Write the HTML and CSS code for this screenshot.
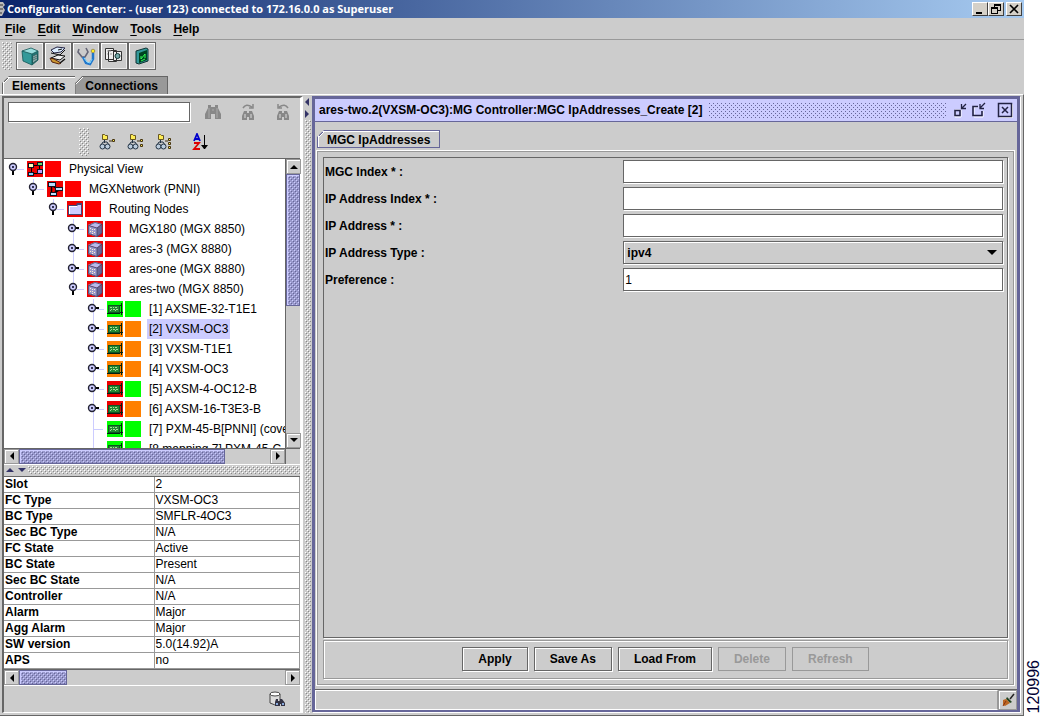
FILE: index.html
```html
<!DOCTYPE html>
<html lang="en">
<head>
    <meta charset="UTF-8">
    <meta name="viewport" content="width=device-width, initial-scale=1.0">
    <title>Configuration Center</title>
    <link rel="stylesheet" href="styles.css">
</head>
<body>
    <!-- shared icon shapes -->
    <svg class="sprite" aria-hidden="true">
        <symbol id="open" viewBox="0 0 12 14">
            <path d="M5 8h2v5H5z" fill="#000"/>
            <circle cx="6" cy="5" r="3.5" fill="#ccf" stroke="#223" stroke-width="1.4"/>
            <path d="M5 4h2v2H5z" fill="#335"/>
        </symbol>
        <symbol id="closed" viewBox="0 0 12 14">
            <path d="M8 5h5v2H8z" fill="#000"/>
            <circle cx="5" cy="6" r="3.5" fill="#ccf" stroke="#223" stroke-width="1.4"/>
            <path d="M4 5h2v2H4z" fill="#335"/>
        </symbol>
        <symbol id="view" viewBox="0 0 16 16">
            <path d="M6 4.500h4M4.500 6v5M5 12.500h5M12.500 4v6" stroke="#000" fill="none"/>
            <path d="M1 2h6v5H1zM10 1h6v4h-6zM1 11h6v4H1zM10 8h6v5h-6z" fill="#112"/>
            <path d="M2 3h4v3H2z" fill="#ffb"/><path d="M11 2h4v2h-4z" fill="#6d6"/><path d="M2 12h4v2H2z" fill="#8cf"/><path d="M11 9h4v3h-4z" fill="#b9f"/>
        </symbol>
        <symbol id="network" viewBox="0 0 16 16">
            <path d="M4.500 5v7M6 5l5 3M7 12l5-3" stroke="#000" stroke-width="1.500" fill="none"/>
            <path d="M1 1h8v5H1zM8 6h8v4H8zM3 11h7v4H3z" fill="#112"/>
            <path d="M2 2h6v3H2zM9 7h6v2H9zM4 12h5v2H4z" fill="#bdf"/>
        </symbol>
        <symbol id="folder" viewBox="0 0 16 16">
            <path d="M1 4h8l1-2h5v12H1z" fill="#447"/><path d="M2 5h8l1-1h3v9H2z" fill="#ccf"/><path d="M2 5h1v8H2zM3 5h7v1H3z" fill="#fff"/>
        </symbol>
        <symbol id="node" viewBox="0 0 16 16">
            <path d="M1 4l7-3 7 2-5 4z" fill="#bbe"/><path d="M1 4l9 3v9l-9-3z" fill="#99c"/><path d="M10 7l5-4v9l-5 4z" fill="#669"/>
            <path d="M1.500 4.500L10 7v8.500l-8.500-3zM10 7l5-4v9l-5 3.500M1.500 4.500L8 1.500l7 2" fill="none" stroke="#446" stroke-width=".8"/>
            <path d="M3 7h1v1H3zM5 8h1v1H5zM7 8h1v1H7zM3 10h1v1H3zM5 10h1v1H5zM7 11h1v1H7zM5 12h1v1H5z" fill="#fec"/>
        </symbol>
        <symbol id="card" viewBox="0 0 16 16">
            <path d="M1 4h12v8H1z" fill="#152"/><path d="M2 5h10v6H2z" fill="#283"/>
            <path d="M0 12h13v1H0zM14 2h1v12h-1zM13 4h1v1h-1zM13 11h3v1h-3z" fill="#021"/>
            <path d="M3 6h2v1H3zM6 6h1v1H6zM8 6h2v1H8zM4 8h1v1H4zM6 8h2v1H6zM9 8h2v1H9zM3 9h1v1H3zM8 9h1v1H8z" fill="#ad9"/>
        </symbol>
        <symbol id="binoculars" viewBox="0 0 18 18">
            <path d="M4 2h3v2h4V2h3v3l3 6v5h-6v-5H7v5H1v-5l3-6z" fill="#888"/><path d="M5 5v10M13 5v10M8 7h2" stroke="#aaa"/>
        </symbol>
        <symbol id="next" viewBox="0 0 18 18">
            <path d="M5 8h3v2h2V8h3l2 5v4h-5v-3H8v3H3v-4z" fill="#888"/><path d="M6 11v4M12 11v4" stroke="#ddd"/>
            <path d="M4 5q3-5 9-1M14 1v4h-4" fill="none" stroke="#888" stroke-width="1.500"/>
        </symbol>
        <symbol id="glasses" viewBox="0 0 18 18">
            <path d="M3.500 1.500h2l1 1h2v4h-5z" fill="#fe5" stroke="#652"/>
            <path d="M5.500 7v3M2 12l2-3h4l2 3" fill="none" stroke="#234"/>
            <circle cx="3.500" cy="13.500" r="2.500" fill="#bcd" stroke="#234"/><circle cx="8.500" cy="13.500" r="2.500" fill="#bcd" stroke="#234"/>
        </symbol>
    </svg>

    <div class="app">
        <header class="titlebar">
            <svg class="app-icon" viewBox="0 0 6 16"><path d="M0 1h3l2 3-2 2 2 3-3 6H0z" fill="#bbb"/><path d="M0 4h3M0 8h3M0 12h2" stroke="#333"/></svg>
            <h1>Configuration Center: - (user 123) connected to 172.16.0.0 as Superuser</h1>
            <div class="window-buttons">
                <button aria-label="Minimize"><svg viewBox="0 0 14 12"><path d="M3 9h6v2H3z"/></svg></button>
                <button aria-label="Restore"><svg viewBox="0 0 14 12"><path d="M5 1h7v7h-3v3H2V4h3zM6 3v1h3v3h2V3zM3 6v4h5V6z" fill-rule="evenodd"/></svg></button>
                <button class="close" aria-label="Close"><svg viewBox="0 0 14 12"><path d="M3 2l8 8M11 2l-8 8" stroke="#000" stroke-width="1.600"/></svg></button>
            </div>
        </header>

        <nav class="menubar">
            <button><u>F</u>ile</button>
            <button><u>E</u>dit</button>
            <button><u>W</u>indow</button>
            <button><u>T</u>ools</button>
            <button><u>H</u>elp</button>
        </nav>

        <div class="toolbar">
            <span class="grip"></span>
            <button aria-label="Elements"><svg viewBox="0 0 20 20"><path d="M2 5l9-3 7 3-6 3z" fill="#9dd"/><path d="M2 5l10 3v11L3 15z" fill="#399"/><path d="M12 8l6-3v9l-6 5z" fill="#277"/><path d="M2 5l9-3 7 3v9l-6 5-9-4zM12 8v11M2 5l10 3 6-3" fill="none" stroke="#155" stroke-width=".8"/><path d="M13 10l4-2v6l-4 3zM13 12l4-2M13 14l4-2M15 9v7" fill="#bdd" stroke="#244" stroke-width=".6"/></svg></button>
            <button aria-label="Configure"><svg viewBox="0 0 20 20"><path d="M3 4l6-3 8 1-4 4-7 1z" fill="#def" stroke="#224"/><path d="M10 4l4-1M3 7l9 2 5-5" stroke="#111" fill="none"/><path d="M3 12l7-3 7 1-5 4z" fill="#eee" stroke="#111"/><path d="M2 12l4 1 7 4-2 1-7-2z" fill="#c93" stroke="#521"/><path d="M12 17l5-4" stroke="#111" stroke-width="1.500"/></svg></button>
            <button aria-label="Diagnostics"><svg viewBox="0 0 20 20"><path d="M3 3l-1 3 4 5h3l3-5-2-4" fill="none" stroke="#667" stroke-width="1.600"/><path d="M7 11l3 6 4 1 3-5V7" fill="none" stroke="#27c" stroke-width="2.500"/><path d="M8 12l3 4 3 1 2-4" fill="none" stroke="#8df"/><circle cx="17" cy="5" r="1.800" fill="#fe2" stroke="#763" stroke-width=".6"/></svg></button>
            <button aria-label="Statistics"><svg viewBox="0 0 20 20"><g fill="#eee" stroke="#333"><path d="M1.500 2.500h8v11h-8zM4.500 4.500h8v11h-8zM9.500 5.500h8v9h-8z"/></g><circle cx="13.500" cy="10" r="2.500" fill="#7aa" stroke="#133"/><path d="M3 5h4M3 8h1M6 8h2" stroke="#999"/></svg></button>
            <button aria-label="Chassis"><svg viewBox="0 0 20 20"><path d="M4 5l10-3 2 1v12L7 18l-3-1z" fill="#399" stroke="#133"/><path d="M7 7l8-3v10l-8 3z" fill="#042"/><path d="M9 10v3l4-5v4M9 15l4-2" stroke="#3f5" fill="none"/></svg></button>
        </div>

        <div class="tabs" role="tablist">
            <button class="tab active" role="tab">Elements</button>
            <button class="tab" role="tab">Connections</button>
        </div>

        <main class="workspace">
            <aside class="sidebar">
                <div class="search">
                    <input type="text" aria-label="Find element">
                    <button aria-label="Find"><svg><use href="#binoculars"/></svg></button>
                    <button aria-label="Find next"><svg><use href="#next"/></svg></button>
                    <button class="flip" aria-label="Find previous"><svg><use href="#next"/></svg></button>
                </div>
                <div class="tree-tools">
                    <span class="grip"></span>
                    <button aria-label="Show one level"><svg viewBox="0 0 18 18"><use href="#glasses" width="18" height="18"/><path d="M10 8h3M13.500 6.500h2v2h-2z" fill="#fe5" stroke="#431"/></svg></button>
                    <button aria-label="Show two levels"><svg viewBox="0 0 18 18"><use href="#glasses" width="18" height="18"/><path d="M10 8h3M13.500 6.500h2v2h-2zM13.500 11.500h2v2h-2z" fill="#fe5" stroke="#431"/></svg></button>
                    <button aria-label="Show all levels"><svg viewBox="0 0 18 18"><use href="#glasses" width="18" height="18"/><path d="M10 8h3M13.500 5.500h2v2h-2zM13.500 9.500h2v2h-2zM13.500 13.500h2v2h-2z" fill="#fe5" stroke="#431"/></svg></button>
                    <button class="sort" aria-label="Sort A to Z"><svg viewBox="0 0 18 18"><path d="M2 8l3-7 3 7M3 6h4" fill="none" stroke="#00c" stroke-width="1.800"/><path d="M2 10h5l-5 6h6" fill="none" stroke="#d00" stroke-width="1.800"/><path d="M12 2h1v10h3l-3 4h-1l-3-4h3z"/></svg></button>
                </div>

                <div class="tree-pane">
                    <div class="tree-view">
                        <ul class="tree">
                            <li>
                                <div class="row"><button class="toggle" aria-label="Collapse"><svg><use href="#open"/></svg></button><svg class="icon red"><use href="#view"/></svg><i class="status red"></i><span class="label">Physical View</span></div>
                                <ul>
                                    <li>
                                        <div class="row"><button class="toggle" aria-label="Collapse"><svg><use href="#open"/></svg></button><svg class="icon red"><use href="#network"/></svg><i class="status red"></i><span class="label">MGXNetwork (PNNI)</span></div>
                                        <ul>
                                            <li>
                                                <div class="row"><button class="toggle" aria-label="Collapse"><svg><use href="#open"/></svg></button><svg class="icon red"><use href="#folder"/></svg><i class="status red"></i><span class="label">Routing Nodes</span></div>
                                                <ul>
                                                    <li><div class="row"><button class="toggle" aria-label="Expand"><svg><use href="#closed"/></svg></button><svg class="icon red"><use href="#node"/></svg><i class="status red"></i><span class="label">MGX180 (MGX 8850)</span></div></li>
                                                    <li><div class="row"><button class="toggle" aria-label="Expand"><svg><use href="#closed"/></svg></button><svg class="icon red"><use href="#node"/></svg><i class="status red"></i><span class="label">ares-3 (MGX 8880)</span></div></li>
                                                    <li><div class="row"><button class="toggle" aria-label="Expand"><svg><use href="#closed"/></svg></button><svg class="icon red"><use href="#node"/></svg><i class="status red"></i><span class="label">ares-one (MGX 8880)</span></div></li>
                                                    <li>
                                                        <div class="row"><button class="toggle" aria-label="Collapse"><svg><use href="#open"/></svg></button><svg class="icon red"><use href="#node"/></svg><i class="status red"></i><span class="label">ares-two (MGX 8850)</span></div>
                                                        <ul>
                                                            <li><div class="row"><button class="toggle" aria-label="Expand"><svg><use href="#closed"/></svg></button><svg class="icon green"><use href="#card"/></svg><i class="status green"></i><span class="label">[1] AXSME-32-T1E1</span></div></li>
                                                            <li><div class="row"><button class="toggle" aria-label="Expand"><svg><use href="#closed"/></svg></button><svg class="icon orange"><use href="#card"/></svg><i class="status orange"></i><span class="label selected">[2] VXSM-OC3</span></div></li>
                                                            <li><div class="row"><button class="toggle" aria-label="Expand"><svg><use href="#closed"/></svg></button><svg class="icon orange"><use href="#card"/></svg><i class="status orange"></i><span class="label">[3] VXSM-T1E1</span></div></li>
                                                            <li><div class="row"><button class="toggle" aria-label="Expand"><svg><use href="#closed"/></svg></button><svg class="icon orange"><use href="#card"/></svg><i class="status orange"></i><span class="label">[4] VXSM-OC3</span></div></li>
                                                            <li><div class="row"><button class="toggle" aria-label="Expand"><svg><use href="#closed"/></svg></button><svg class="icon red"><use href="#card"/></svg><i class="status green"></i><span class="label">[5] AXSM-4-OC12-B</span></div></li>
                                                            <li><div class="row"><button class="toggle" aria-label="Expand"><svg><use href="#closed"/></svg></button><svg class="icon red"><use href="#card"/></svg><i class="status orange"></i><span class="label">[6] AXSM-16-T3E3-B</span></div></li>
                                                            <li><div class="row"><span class="leaf"></span><svg class="icon green"><use href="#card"/></svg><i class="status green"></i><span class="label">[7] PXM-45-B[PNNI] (cove</span></div></li>
                                                            <li><div class="row"><span class="leaf"></span><svg class="icon green"><use href="#card"/></svg><i class="status green"></i><span class="label">[8 mapping 7] PXM-45-C</span></div></li>
                                                        </ul>
                                                    </li>
                                                </ul>
                                            </li>
                                        </ul>
                                    </li>
                                </ul>
                            </li>
                        </ul>
                    </div>
                    <div class="scrollbar vertical">
                        <button aria-label="Scroll up"><svg viewBox="0 0 10 10"><path d="M1 7l4-4 4 4z"/></svg></button>
                        <div class="track"><div class="thumb tree-y"></div></div>
                        <button aria-label="Scroll down"><svg viewBox="0 0 10 10"><path d="M1 3l4 4 4-4z"/></svg></button>
                    </div>
                    <div class="scrollbar">
                        <button aria-label="Scroll left"><svg viewBox="0 0 10 10"><path d="M7 1L3 5l4 4z"/></svg></button>
                        <div class="track"><div class="thumb tree-x"></div></div>
                        <button aria-label="Scroll right"><svg viewBox="0 0 10 10"><path d="M3 1l4 4-4 4z"/></svg></button>
                    </div>
                    <div class="corner"></div>
                </div>

                <div class="divider-row">
                    <svg viewBox="0 0 24 8"><path d="M2 6l4-4 4 4zM14 2l4 4 4-4z"/></svg>
                    <span class="bumps"></span>
                </div>

                <div class="details">
                    <table>
                        <tbody>
                            <tr><th scope="row">Slot</th><td>2</td></tr>
                            <tr><th scope="row">FC Type</th><td>VXSM-OC3</td></tr>
                            <tr><th scope="row">BC Type</th><td>SMFLR-4OC3</td></tr>
                            <tr><th scope="row">Sec BC Type</th><td>N/A</td></tr>
                            <tr><th scope="row">FC State</th><td>Active</td></tr>
                            <tr><th scope="row">BC State</th><td>Present</td></tr>
                            <tr><th scope="row">Sec BC State</th><td>N/A</td></tr>
                            <tr><th scope="row">Controller</th><td>N/A</td></tr>
                            <tr><th scope="row">Alarm</th><td>Major</td></tr>
                            <tr><th scope="row">Agg Alarm</th><td>Major</td></tr>
                            <tr><th scope="row">SW version</th><td>5.0(14.92)A</td></tr>
                            <tr><th scope="row">APS</th><td>no</td></tr>
                        </tbody>
                    </table>
                    <div class="scrollbar">
                        <button aria-label="Scroll left"><svg viewBox="0 0 10 10"><path d="M7 1L3 5l4 4z"/></svg></button>
                        <div class="track"><div class="thumb details-x"></div></div>
                        <button aria-label="Scroll right"><svg viewBox="0 0 10 10"><path d="M3 1l4 4-4 4z"/></svg></button>
                    </div>
                </div>

                <div class="sidebar-foot">
                    <button aria-label="Find in database"><svg viewBox="0 0 16 16"><path d="M1 3v9q4 3 10 1V3" fill="#ddd" stroke="#444"/><ellipse cx="6" cy="3" rx="5" ry="2" fill="#fff" stroke="#444"/><path d="M7 8h2v2h2V8h2l3 4v3h-4v-2h-1v2H6v-4z" fill="#334"/><path d="M7 13h2M13 13h2" stroke="#8ad" stroke-width="2"/></svg></button>
                </div>
            </aside>

            <div class="divider-col">
                <svg viewBox="0 0 6 24"><path d="M5 2v8L1 6zM1 14v8l4-4z"/></svg>
                <span class="bumps"></span>
            </div>

            <section class="frame">
                <header class="frame-title">
                    <h2>ares-two.2(VXSM-OC3):MG Controller:MGC IpAddresses_Create [2]</h2>
                    <span class="bumps"></span>
                    <div class="frame-buttons">
                        <button aria-label="Iconify"><svg viewBox="0 0 16 16"><path d="M2 8h6v7H2z" fill="none" stroke="#fff"/><path d="M2 8.500h5v5H2z" fill="none" stroke="#224" stroke-width="1.600"/><path d="M13 2L9 6M8.500 2v4.500H13" fill="none" stroke="#224" stroke-width="1.300"/></svg></button>
                        <button aria-label="Maximize"><svg viewBox="0 0 16 16"><path d="M7 5H3v10h9V9" fill="none" stroke="#fff"/><path d="M7 4.500H2v9h9V9" fill="none" stroke="#224" stroke-width="1.600"/><path d="M14 1L9 6M9 2v4.500h4" fill="none" stroke="#224" stroke-width="1.300"/></svg></button>
                        <button class="frame-close" aria-label="Close form"><svg viewBox="0 0 16 16"><path d="M2.500 2.500h13v13h-13z" fill="none" stroke="#fff"/><path d="M1.500 1.500h13v13h-13z" fill="#ccf" stroke="#224" stroke-width="1.500"/><path d="M5 5l6 6M11 5l-6 6" stroke="#224" stroke-width="1.500"/></svg></button>
                    </div>
                </header>

                <div class="frame-tabs" role="tablist">
                    <button class="tab" role="tab">MGC IpAddresses</button>
                </div>

                <form class="panel">
                    <div class="fields">
                        <label for="mgc-index">MGC Index * :</label>
                        <input type="text" id="mgc-index">
                        <label for="ip-index">IP Address Index * :</label>
                        <input type="text" id="ip-index">
                        <label for="ip-address">IP Address * :</label>
                        <input type="text" id="ip-address">
                        <label for="ip-type">IP Address Type :</label>
                        <div class="combo">
                            <select id="ip-type"><option>ipv4</option></select>
                            <svg viewBox="0 0 10 5"><path d="M0 0h10L5 5z"/></svg>
                        </div>
                        <label for="preference">Preference :</label>
                        <input type="text" id="preference" value="1">
                    </div>
                    <div class="actions">
                        <button type="button">Apply</button>
                        <button type="button">Save As</button>
                        <button type="button">Load From</button>
                        <button type="button" disabled>Delete</button>
                        <button type="button" disabled>Refresh</button>
                    </div>
                </form>

                <footer class="frame-status">
                    <output></output>
                    <button aria-label="Pin messages"><svg viewBox="0 0 16 16"><path d="M14 2l-4 5" stroke="#222" stroke-width="1.500"/><path d="M7 5l5 5-2 1-4-4z" fill="#242"/><path d="M3 8l3-1 4 4-5 3-2-1z" fill="#b62"/><path d="M3 14l3-5" stroke="#831"/></svg></button>
                </footer>
            </section>
        </main>
    </div>

    <div class="figure-number"><span>120996</span></div>
</body>
</html>
```
FILE: styles.css
```css
/* --- RESET & BASE -------------------------------------- */
* { box-sizing: border-box; margin: 0; padding: 0; }
:root {
    --face: #ccc;
    --dark: #666;
    --mid: #999;
    --purple: #669;
    --lavender: #ccf;
    --bumps: url("data:image/svg+xml,%3Csvg xmlns='http://www.w3.org/2000/svg' width='4' height='4' shape-rendering='crispEdges'%3E%3Cpath d='M0 0h1v1H0zM2 2h1v1H2z' fill='%23fff'/%3E%3Cpath d='M1 1h1v1H1zM3 3h1v1H3z' fill='%23888'/%3E%3C/svg%3E");
    --bumps-purple: url("data:image/svg+xml,%3Csvg xmlns='http://www.w3.org/2000/svg' width='4' height='4' shape-rendering='crispEdges'%3E%3Cpath d='M0 0h1v1H0zM2 2h1v1H2z' fill='%23ccf'/%3E%3Cpath d='M1 1h1v1H1zM3 3h1v1H3z' fill='%23669'/%3E%3C/svg%3E");
}
body {
    display: flex;
    height: 100vh;
    overflow: hidden;
    background: #fff;
    color: #000;
    font: 12px/16px "Liberation Sans", Arial, sans-serif;
}
button, input, select { font: inherit; color: inherit; }
button { border: none; background: none; }
button, label { font-weight: 700; }
ul { list-style: none; }
svg { display: block; }
.sprite { position: absolute; width: 0; height: 0; }

.app {
    flex: 1;
    min-width: 0;
    display: flex;
    flex-direction: column;
    background: var(--face);
    border-bottom: 1px solid var(--dark);
}

/* --- TITLE BAR ----------------------------------------- */
.titlebar {
    display: flex;
    align-items: center;
    height: 18px;
    padding-right: 2px;
    background: linear-gradient(90deg, #0a246a, #a6caf0);
    color: #fff;
}
.app-icon { width: 6px; height: 16px; margin-right: 1px; }
.titlebar h1 { flex: 1; font: 700 11px/16px "Open Sans", Tahoma, sans-serif; }
.window-buttons { display: flex; }
.window-buttons button {
    width: 16px;
    height: 14px;
    background: #d4d0c8;
    border: 1px solid;
    border-color: #fff #404040 #404040 #fff;
}
.window-buttons svg { width: 14px; height: 12px; }
.window-buttons .close { margin-left: 2px; }

/* --- MENU & TOOLBAR ------------------------------------ */
.menubar {
    display: flex;
    align-items: flex-end;
    gap: 12px;
    height: 22px;
    padding: 0 5px 1px;
    border-bottom: 1px solid var(--mid);
}
.menubar button { height: 18px; }
.menubar u { text-underline-offset: 2px; }

.toolbar {
    display: flex;
    height: 36px;
    padding: 2px;
}
.grip { width: 10px; height: 28px; background: var(--bumps); }
.toolbar .grip { margin-right: 4px; }
.toolbar button {
    display: grid;
    place-items: center;
    width: 28px;
    height: 28px;
    border: 1px solid var(--dark);
    box-shadow: inset 1px 1px #fff, inset -1px -1px #eee;
}
.toolbar svg { width: 20px; height: 20px; }

/* --- TABS ---------------------------------------------- */
.tabs { display: flex; height: 18px; padding-left: 2px; }
.tab {
    height: 18px;
    padding: 2px 10px 0;
    background: linear-gradient(135deg, var(--dark) 6px, #fff 6px, #fff 7px, var(--mid) 7px);
    box-shadow: inset 1px 1px var(--dark), inset -1px 0 var(--dark);
    clip-path: polygon(0 7px, 7px 0, 100% 0, 100% 100%, 0 100%);
}
.tabs .active {
    background: linear-gradient(135deg, var(--dark) 6px, #fff 6px, #fff 7px, var(--face) 7px);
    box-shadow: inset 1px 1px var(--dark), inset 2px 2px #fff;
}

/* --- WORKSPACE ----------------------------------------- */
.workspace {
    flex: 1;
    min-height: 0;
    display: flex;
    padding: 1px 2px 2px;
    border-top: 1px solid #fff;
    border-right: 1px solid var(--dark);
}
.bumps { flex: 1; background: var(--bumps); }

.sidebar {
    display: flex;
    flex-direction: column;
    width: 301px;
    border: solid var(--dark);
    border-width: 2px 0 0 2px;
    border-right: 3px solid #fff;
    border-bottom: 1px solid #fff;
}
.search {
    display: flex;
    align-items: center;
    gap: 17px;
    padding: 4px 8px 4px 4px;
}
.search input { flex: 1; width: 0; margin-right: -3px; }
.search svg, .tree-tools svg { width: 18px; height: 18px; }
.flip { transform: scaleX(-1); }
.tree-tools {
    display: flex;
    align-items: center;
    gap: 10px;
    height: 32px;
    padding-left: 75px;
}
.tree-tools .sort { margin-left: 9px; }

input {
    height: 20px;
    padding: 0 1px;
    background: #fff;
    border: 1px solid var(--dark);
    box-shadow: 1px 1px #fff;
    outline: none;
}

/* --- SCROLLBARS ---------------------------------------- */
.scrollbar {
    display: flex;
    height: 16px;
    border-top: 1px solid var(--dark);
}
.scrollbar button {
    display: grid;
    place-items: center;
    width: 15px;
    height: 15px;
    border: 1px solid var(--mid);
    box-shadow: inset 1px 1px #fff;
}
.scrollbar button svg { width: 10px; height: 10px; }
.track { flex: 1; display: flex; }
.thumb { background: var(--bumps-purple) 3px 3px #99c; border: 1px solid var(--purple); box-shadow: inset 1px 1px var(--lavender); }
.vertical {
    flex-direction: column;
    width: 15px;
    height: auto;
    border-top: none;
    border-left: 1px solid var(--dark);
}
.vertical .track { flex-direction: column; }
.tree-y { height: 51%; }
.tree-x { width: 82%; }
.details-x { width: 18%; }

/* --- ELEMENT TREE -------------------------------------- */
.tree-pane {
    flex: 1;
    min-height: 0;
    display: grid;
    grid-template: minmax(0, 1fr) 16px / minmax(0, 1fr) 15px;
    border-top: 1px solid var(--dark);
}
.corner { border: solid var(--dark); border-width: 1px 0 0 1px; }
.tree-view { overflow: hidden; background: #fff; }
.tree { padding-left: 3px; }
.tree ul { padding-left: 20px; }
.tree ul > li { background: linear-gradient(var(--lavender), var(--lavender)) 6px 0 / 1px 100% no-repeat; }
.tree ul > li:last-child { background-size: 1px 10px; }
.row { display: flex; align-items: center; height: 20px; }
.toggle { flex: none; width: 20px; background: linear-gradient(var(--lavender), var(--lavender)) 10px 7px / 7px 1px no-repeat; }
.toggle svg { width: 12px; height: 14px; overflow: visible; }
.leaf { flex: none; width: 20px; height: 1px; background: linear-gradient(90deg, transparent 6px, var(--lavender) 6px, var(--lavender) 16px, transparent 16px); }
.icon, .status { flex: none; width: 16px; height: 16px; }
.status { margin: 0 6px 0 2px; }
.red { background: #f00; }
.green { background: #0f0; }
.orange { background: #ff8000; }
.icon.red { background: #e00; }
.label { height: 20px; padding: 0 2px; line-height: 20px; white-space: nowrap; }
.selected { background: var(--lavender); }

/* --- SPLIT DIVIDERS ------------------------------------ */
.divider-row { display: flex; align-items: center; height: 12px; border-top: 1px solid #fff; }
.divider-row svg { width: 24px; height: 8px; fill: #336; }
.divider-row .bumps { height: 8px; }
.divider-col { display: flex; flex-direction: column; width: 9px; padding-left: 1px; }
.divider-col svg { width: 6px; height: 24px; fill: #336; }
.divider-col .bumps { margin: 0 1px; }

/* --- DETAILS TABLE ------------------------------------- */
.details { border-top: 1px solid var(--dark); border-bottom: 1px solid #fff; }
table { width: 100%; border-collapse: collapse; table-layout: fixed; background: #fff; }
th, td { height: 16px; padding: 0 1px; line-height: 15px; text-align: left; border-bottom: 1px solid var(--mid); }
th { width: 150px; border-right: 1px solid var(--mid); }
td { border-right: 1px solid var(--mid); }
.sidebar-foot { display: flex; justify-content: flex-end; padding: 5px 15px 5px; }
.sidebar-foot svg { width: 16px; height: 16px; }

/* --- INTERNAL FRAME ------------------------------------ */
.frame {
    flex: 1;
    min-width: 0;
    display: flex;
    flex-direction: column;
    margin: 0 1px 1px 0;
    border: solid var(--purple);
    border-width: 3px 3px 2px;
    box-shadow: 1px 1px #fff;
}
.frame-title {
    display: flex;
    align-items: center;
    height: 23px;
    padding: 0 4px;
    background: var(--lavender);
    border-bottom: 1px solid var(--purple);
}
.frame-title h2 { font-size: 12px; white-space: nowrap; }
.frame-title .bumps { height: 16px; margin: 0 6px; background: var(--bumps-purple); }
.frame-buttons { display: flex; gap: 2px; }
.frame-buttons svg { width: 16px; height: 16px; }
.frame-close { margin-left: 8px; }
.frame-tabs { padding: 8px 2px 0; }
.frame-tabs .tab {
    padding: 1px 10px 0;
    background: linear-gradient(135deg, var(--purple) 6px, #fff 6px, #fff 7px, var(--face) 7px);
    box-shadow: inset 0 0 0 1px var(--purple), inset 2px 2px #fff;
}
.panel {
    flex: 1;
    min-height: 0;
    display: flex;
    flex-direction: column;
    gap: 2px;
    margin: 2px 2px 3px 1px;
    padding: 6px;
    border: 1px solid #fff;
    box-shadow: inset 1px 1px var(--mid), inset -1px -1px var(--mid);
}
.fields {
    flex: 1;
    display: grid;
    grid-template-columns: 44% 1fr;
    align-content: start;
    align-items: center;
    row-gap: 4px;
    padding: 2px 4px 2px 1px;
    border: 1px solid var(--dark);
    box-shadow: 1px 1px #fff;
}
.fields input { width: 100%; height: 23px; }
.combo { display: grid; align-items: center; justify-items: end; }
.combo select, .combo svg { grid-area: 1 / 1; }
.combo select {
    width: 100%;
    height: 23px;
    padding: 0 3px;
    appearance: none;
    background: var(--face);
    border: 1px solid var(--dark);
    border-radius: 0;
    box-shadow: 1px 1px #fff, inset 1px 1px #fff;
    font-weight: 700;
}
.combo svg { width: 10px; height: 5px; margin-right: 6px; pointer-events: none; }
.actions {
    display: flex;
    justify-content: center;
    gap: 6px;
    padding: 6px 0 7px;
    border: 1px solid var(--mid);
    box-shadow: 1px 1px #fff, inset 1px 1px #fff;
}
.actions button {
    height: 24px;
    padding: 0 15px;
    border: 1px solid var(--dark);
    box-shadow: 1px 1px #fff, inset 1px 1px #fff;
}
.actions button:disabled { color: var(--mid); border-color: var(--mid); box-shadow: none; }

.frame-status { display: flex; height: 21px; border-top: 1px solid var(--dark); }
.frame-status output { flex: 1; border: 1px solid #fff; border-right-color: var(--mid); }
.frame-status button { display: grid; place-items: center; width: 19px; border: 1px solid var(--mid); box-shadow: inset 1px 1px #fff; }
.frame-status svg { width: 16px; height: 16px; }

/* --- FIGURE NUMBER ------------------------------------- */
.figure-number { display: flex; align-items: flex-end; justify-content: center; width: 20px; padding-bottom: 3px; }
.figure-number span { writing-mode: vertical-rl; transform: rotate(180deg); font-size: 16px; line-height: 20px; color: #003; }
```
